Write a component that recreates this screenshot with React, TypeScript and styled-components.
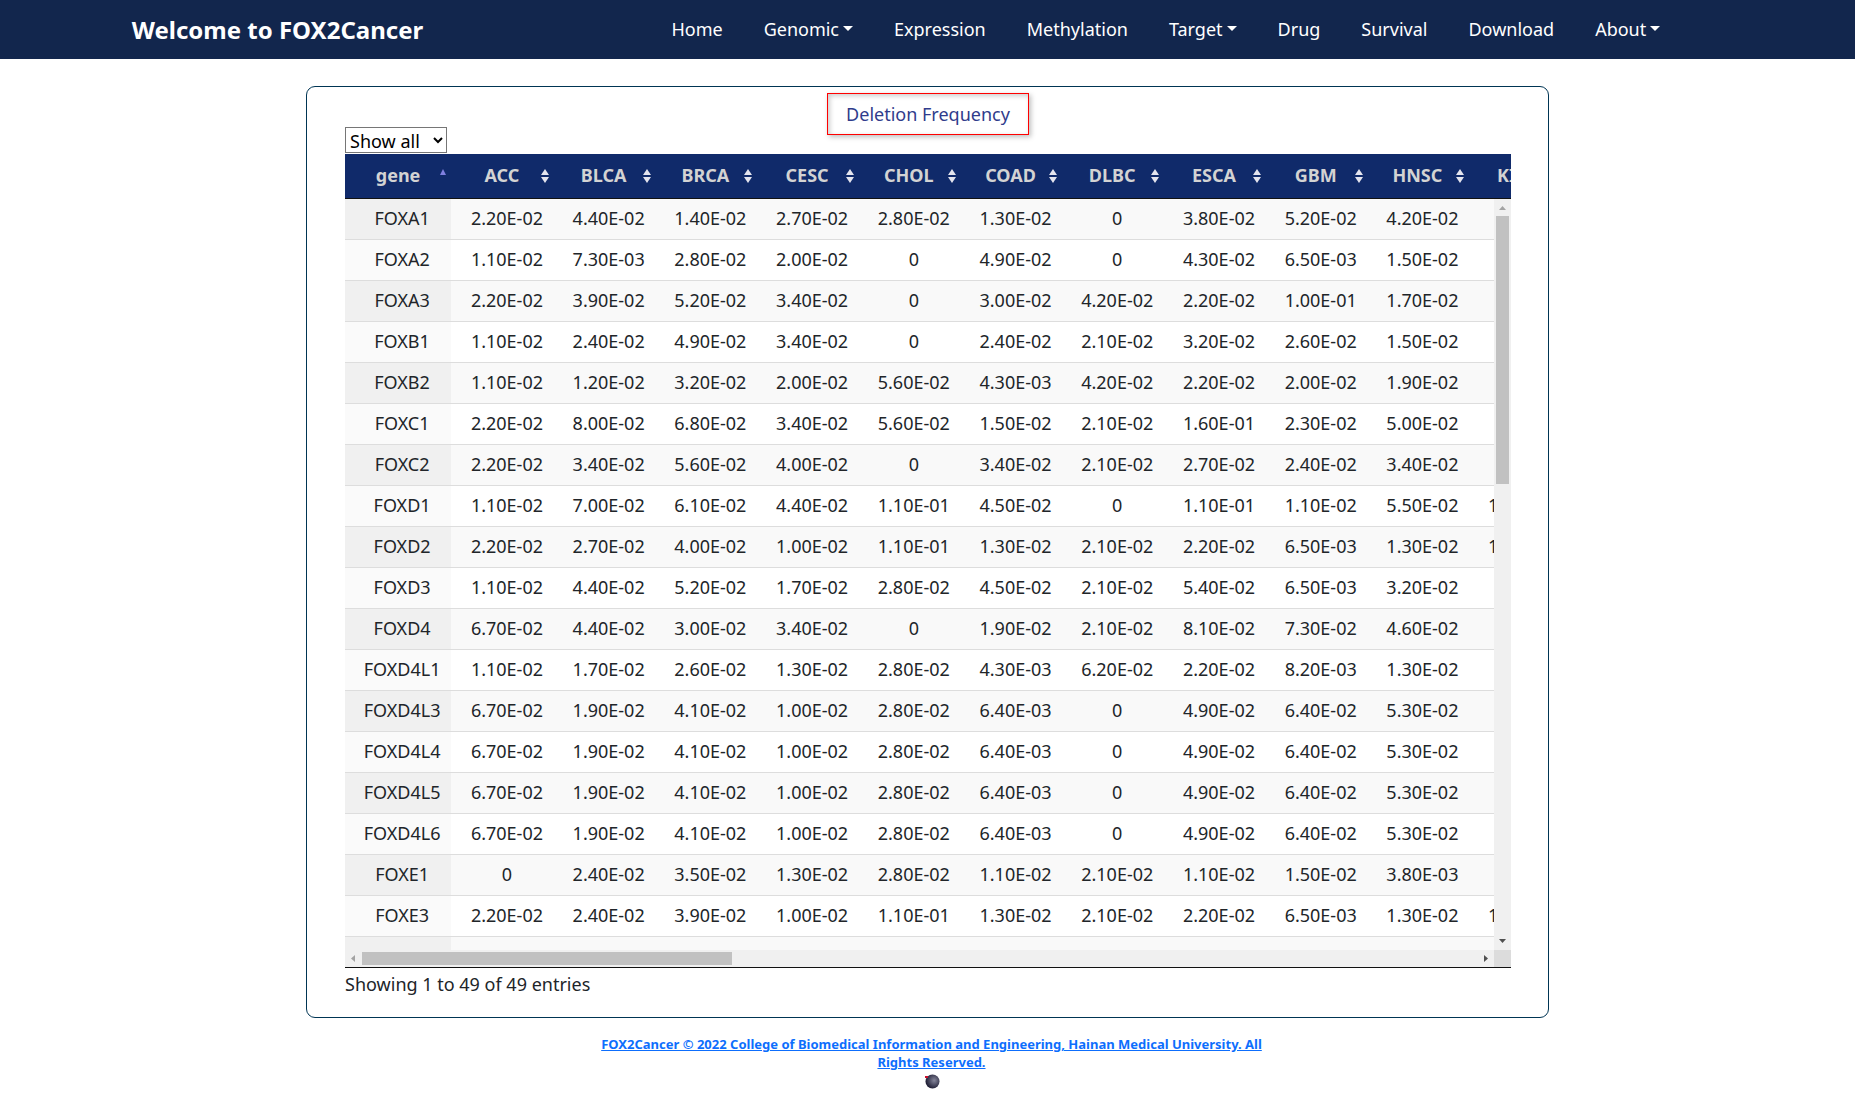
import React from "react";
import styled, { createGlobalStyle } from "styled-components";

const GlobalStyle = createGlobalStyle`
  *, *::before, *::after { box-sizing: border-box; }
  body {
    margin: 0;
    background: #fff;
    color: #212529;
    font-family: "Segoe UI", "Noto Sans", "Open Sans", sans-serif;
    font-size: 18px;
    line-height: 24px;
  }
  button, select { font: inherit; color: inherit; }
`;

const NavBar = styled.header`
  display: flex;
  align-items: center;
  justify-content: space-between;
  height: 59px;
  padding: 0 10.5% 0 7.1%;
  background: #12264d;
  color: #fff;
`;

const Brand = styled.a`
  color: inherit;
  font-size: 24px;
  font-weight: 700;
  line-height: 32px;
  text-decoration: none;
  white-space: nowrap;
`;

const NavList = styled.nav`
  display: flex;
  gap: 41px;
  padding-bottom: 2px;
`;

const NavLink = styled.a`
  display: flex;
  align-items: center;
  gap: 4px;
  color: inherit;
  text-decoration: none;
`;

const Caret = styled.span`
  border: 5px solid transparent;
  border-top-color: currentColor;
  border-bottom: 0;
`;

const Card = styled.main`
  width: 67%;
  margin: 27px auto 0;
  padding: 6px 37px 21px 38px;
  border: 1px solid #003554;
  border-radius: 9px;
`;

const Toolbar = styled.div`
  display: grid;
  grid-template-columns: 1fr auto 1fr;
  height: 61px;
  padding-bottom: 1px;
`;

const LengthSelect = styled.select`
  align-self: end;
  justify-self: start;
  width: 102px;
  height: 26px;
  padding: 0 0 2px;
  border: 1px solid #767676;
  border-radius: 0;
  background: #fff;
  color: #000;
`;

const Title = styled.h1`
  align-self: start;
  margin: 0;
  padding: 8px 18px;
  border: 1px solid #f00;
  box-shadow: 2px 2px 5px rgba(0, 0, 0, 0.25), inset 2px 2px 5px rgba(0, 0, 0, 0.2);
  color: #303c8c;
  font-size: 18px;
  font-weight: 400;
  line-height: 24px;
`;

const HeadViewport = styled.div`
  overflow: hidden;
  background: #102a6a;
  border-bottom: 1px solid #111;
`;

const DataTable = styled.table`
  width: 1225px;
  table-layout: fixed;
  border-collapse: separate;
  border-spacing: 0;
`;

const GeneCol = styled.col`
  width: 106px;
`;

const HeadCell = styled.th`
  height: 44px;
  padding: 0 0 2px;
`;

const SortButton = styled.button`
  display: grid;
  grid-template-columns: 12px 1fr 12px;
  align-items: center;
  width: 100%;
  height: 36px;
  padding: 0;
  border: 0;
  background: none;
  color: #d3d3d3;
  font-weight: 700;

  svg { display: block; margin-top: 2px; }
`;

const ScrollPane = styled.div`
  display: grid;
  grid-template-columns: minmax(0, 1fr) 17px;
  grid-template-rows: 751px 17px;
  border-bottom: 1px solid #111;
`;

const BodyViewport = styled.div`
  overflow: hidden;
`;

const Row = styled.tr`
  background: #fff;
  &:nth-child(odd) { background: #f9f9f9; }
`;

const Cell = styled.td`
  height: 41px;
  padding: 0 8px 2px 18px;
  border-bottom: 1px solid #ddd;
  text-align: center;
  white-space: nowrap;
`;

const GeneCell = styled(Cell).attrs({ as: "th", scope: "row" })`
  padding: 0 0 2px 8px;
  background: #fafafa;
  font-weight: 400;
  ${Row}:nth-child(odd) & { background: #f0f0f0; }
`;

const ScrollTrack = styled.div<{ $axis: "x" | "y" }>`
  display: flex;
  flex-direction: ${(p) => (p.$axis === "x" ? "row" : "column")};
  background: #f0f0f0;
`;

const ScrollRail = styled.div<{ $axis: "x" | "y" }>`
  flex: 1;
  padding: ${(p) => (p.$axis === "x" ? "2px 0" : "0 2px")};
`;

const ScrollThumb = styled.div<{ $axis: "x" | "y"; $share: string }>`
  width: ${(p) => (p.$axis === "x" ? p.$share : "100%")};
  height: ${(p) => (p.$axis === "x" ? "100%" : p.$share)};
  background: #c1c1c1;
`;

const ScrollArrow = styled.button`
  width: 17px;
  height: 17px;
  padding: 0;
  border: 0;
  background: none;
  svg { display: block; }
`;

const ScrollCorner = styled.div`
  background: #dcdcdc;
`;

const TableInfo = styled.p`
  margin: 0;
  padding-top: 4px;
`;

const Footer = styled.footer`
  display: flex;
  flex-direction: column;
  align-items: center;
  width: 690px;
  max-width: 100%;
  margin: 0 auto;
  padding: 17px 0 0 8px;
  font-size: 13px;
  font-weight: 700;
  line-height: 18px;
  text-align: center;

  svg { display: block; margin-top: 2px; }
`;

const FooterLink = styled.a`
  color: #0d6efd;
`;

const NAV: { label: string; menu?: boolean }[] = [
  { label: "Home" },
  { label: "Genomic", menu: true },
  { label: "Expression" },
  { label: "Methylation" },
  { label: "Target", menu: true },
  { label: "Drug" },
  { label: "Survival" },
  { label: "Download" },
  { label: "About", menu: true },
];

const COLUMNS = ["ACC", "BLCA", "BRCA", "CESC", "CHOL", "COAD", "DLBC", "ESCA", "GBM", "HNSC", "KICH"];

const ROWS = `
FOXA1 2.20E-02 4.40E-02 1.40E-02 2.70E-02 2.80E-02 1.30E-02 0 3.80E-02 5.20E-02 4.20E-02
FOXA2 1.10E-02 7.30E-03 2.80E-02 2.00E-02 0 4.90E-02 0 4.30E-02 6.50E-03 1.50E-02
FOXA3 2.20E-02 3.90E-02 5.20E-02 3.40E-02 0 3.00E-02 4.20E-02 2.20E-02 1.00E-01 1.70E-02
FOXB1 1.10E-02 2.40E-02 4.90E-02 3.40E-02 0 2.40E-02 2.10E-02 3.20E-02 2.60E-02 1.50E-02
FOXB2 1.10E-02 1.20E-02 3.20E-02 2.00E-02 5.60E-02 4.30E-03 4.20E-02 2.20E-02 2.00E-02 1.90E-02
FOXC1 2.20E-02 8.00E-02 6.80E-02 3.40E-02 5.60E-02 1.50E-02 2.10E-02 1.60E-01 2.30E-02 5.00E-02
FOXC2 2.20E-02 3.40E-02 5.60E-02 4.00E-02 0 3.40E-02 2.10E-02 2.70E-02 2.40E-02 3.40E-02
FOXD1 1.10E-02 7.00E-02 6.10E-02 4.40E-02 1.10E-01 4.50E-02 0 1.10E-01 1.10E-02 5.50E-02 1.50E-02
FOXD2 2.20E-02 2.70E-02 4.00E-02 1.00E-02 1.10E-01 1.30E-02 2.10E-02 2.20E-02 6.50E-03 1.30E-02 1.50E-02
FOXD3 1.10E-02 4.40E-02 5.20E-02 1.70E-02 2.80E-02 4.50E-02 2.10E-02 5.40E-02 6.50E-03 3.20E-02
FOXD4 6.70E-02 4.40E-02 3.00E-02 3.40E-02 0 1.90E-02 2.10E-02 8.10E-02 7.30E-02 4.60E-02
FOXD4L1 1.10E-02 1.70E-02 2.60E-02 1.30E-02 2.80E-02 4.30E-03 6.20E-02 2.20E-02 8.20E-03 1.30E-02
FOXD4L3 6.70E-02 1.90E-02 4.10E-02 1.00E-02 2.80E-02 6.40E-03 0 4.90E-02 6.40E-02 5.30E-02
FOXD4L4 6.70E-02 1.90E-02 4.10E-02 1.00E-02 2.80E-02 6.40E-03 0 4.90E-02 6.40E-02 5.30E-02
FOXD4L5 6.70E-02 1.90E-02 4.10E-02 1.00E-02 2.80E-02 6.40E-03 0 4.90E-02 6.40E-02 5.30E-02
FOXD4L6 6.70E-02 1.90E-02 4.10E-02 1.00E-02 2.80E-02 6.40E-03 0 4.90E-02 6.40E-02 5.30E-02
FOXE1 0 2.40E-02 3.50E-02 1.30E-02 2.80E-02 1.10E-02 2.10E-02 1.10E-02 1.50E-02 3.80E-03
FOXE3 2.20E-02 2.40E-02 3.90E-02 1.00E-02 1.10E-01 1.30E-02 2.10E-02 2.20E-02 6.50E-03 1.30E-02 1.50E-02
`
  .trim()
  .split("\n")
  .map((line) => line.split(" "));

function SortIcon({ ascending = false }: { ascending?: boolean }) {
  return (
    <svg width="8" height="14" viewBox="0 0 8 14" aria-hidden="true">
      <path d={ascending ? "M4 0L7 6H1Z" : "M4 0L8 6H0Z"} fill={ascending ? "#8080e0" : "#e4e4ee"} />
      {!ascending && <path d="M0 8H8L4 14Z" fill="#e4e4ee" />}
    </svg>
  );
}

const ARROWS = {
  up: { d: "M5 11L8.5 7L12 11Z", fill: "#a3a3a3" },
  down: { d: "M5 6L8.5 10L12 6Z", fill: "#505050" },
  left: { d: "M10 5L6 8.5L10 12Z", fill: "#a3a3a3" },
  right: { d: "M7 5L11 8.5L7 12Z", fill: "#505050" },
};

function Arrow({ to }: { to: keyof typeof ARROWS }) {
  return (
    <ScrollArrow type="button" aria-label={`Scroll ${to}`}>
      <svg width="17" height="17" viewBox="0 0 17 17">
        <path d={ARROWS[to].d} fill={ARROWS[to].fill} />
      </svg>
    </ScrollArrow>
  );
}

function ColumnGroup() {
  return (
    <colgroup>
      <GeneCol />
      {COLUMNS.map((c) => (
        <col key={c} />
      ))}
    </colgroup>
  );
}

function Globe() {
  return (
    <svg width="16" height="16" viewBox="0 0 16 16" aria-hidden="true">
      <defs>
        <radialGradient id="globe" cx="62%" cy="42%" r="62%">
          <stop offset="0" stopColor="#85859a" />
          <stop offset="0.5" stopColor="#505066" />
          <stop offset="1" stopColor="#1d1b32" />
        </radialGradient>
      </defs>
      <circle cx="8.5" cy="8.5" r="7" fill="url(#globe)" />
      <rect x="1" y="3" width="3" height="2" fill="#c8102e" />
    </svg>
  );
}

export default function App() {
  return (
    <>
      <GlobalStyle />
      <NavBar>
        <Brand href="#">Welcome to FOX2Cancer</Brand>
        <NavList>
          {NAV.map((item) => (
            <NavLink key={item.label} href="#">
              {item.label}
              {item.menu && <Caret />}
            </NavLink>
          ))}
        </NavList>
      </NavBar>

      <Card>
        <Toolbar>
          <LengthSelect aria-label="Rows shown">
            <option>Show all</option>
          </LengthSelect>
          <Title>Deletion Frequency</Title>
        </Toolbar>

        <HeadViewport>
          <DataTable>
            <ColumnGroup />
            <thead>
              <tr>
                {["gene", ...COLUMNS].map((name, i) => (
                  <HeadCell key={name} scope="col">
                    <SortButton type="button">
                      <span />
                      {name}
                      <SortIcon ascending={i === 0} />
                    </SortButton>
                  </HeadCell>
                ))}
              </tr>
            </thead>
          </DataTable>
        </HeadViewport>

        <ScrollPane>
          <BodyViewport>
            <DataTable aria-label="Deletion Frequency">
              <ColumnGroup />
              <tbody>
                {ROWS.map(([gene, ...values]) => (
                  <Row key={gene}>
                    <GeneCell>{gene}</GeneCell>
                    {COLUMNS.map((c, i) => (
                      <Cell key={c}>{values[i]}</Cell>
                    ))}
                  </Row>
                ))}
                <Row>
                  <GeneCell />
                  {COLUMNS.map((c) => (
                    <Cell key={c} />
                  ))}
                </Row>
              </tbody>
            </DataTable>
          </BodyViewport>
          <ScrollTrack $axis="y">
            <Arrow to="up" />
            <ScrollRail $axis="y">
              <ScrollThumb $axis="y" $share="37.4%" />
            </ScrollRail>
            <Arrow to="down" />
          </ScrollTrack>
          <ScrollTrack $axis="x">
            <Arrow to="left" />
            <ScrollRail $axis="x">
              <ScrollThumb $axis="x" $share="33.2%" />
            </ScrollRail>
            <Arrow to="right" />
          </ScrollTrack>
          <ScrollCorner />
        </ScrollPane>
        <TableInfo>Showing 1 to 49 of 49 entries</TableInfo>
      </Card>

      <Footer>
        <FooterLink href="#">
          FOX2Cancer © 2022 College of Biomedical Information and Engineering, Hainan Medical University. All Rights
          Reserved.
        </FooterLink>
        <Globe />
      </Footer>
    </>
  );
}
